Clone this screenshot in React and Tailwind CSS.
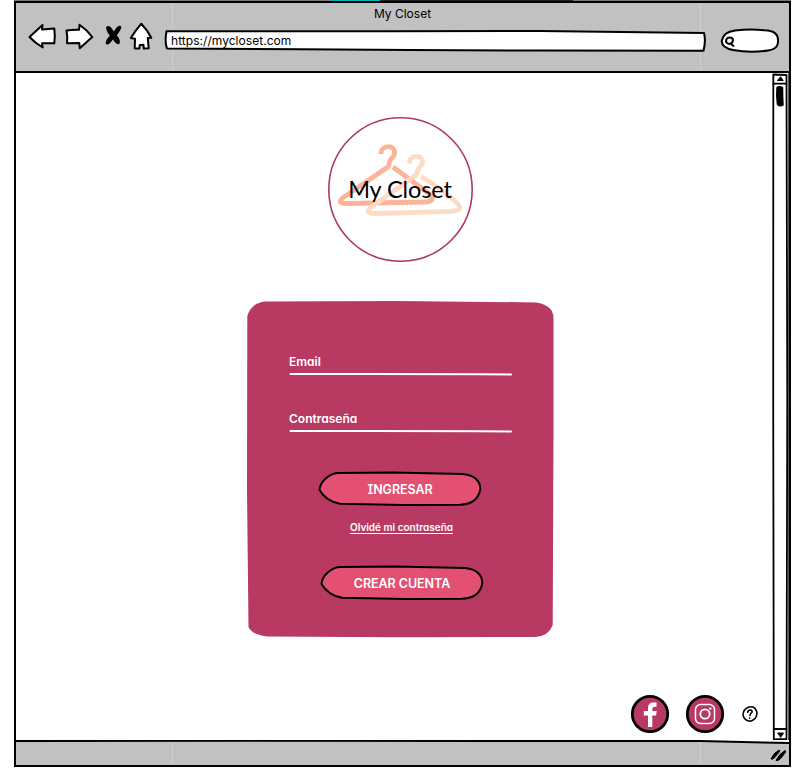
import React from 'react';

const ink = { fill: 'none', stroke: '#000', strokeWidth: 2, strokeLinecap: 'round', strokeLinejoin: 'round' };

function NavIcons() {
  return (
    <div className="flex h-[30px] shrink-0">
      <svg className="h-[30px] w-[30px]" viewBox="28 22 30 30" {...ink} fill="#fff">
        <path d="M29.5 37 L42.5 25 L42 29.5 L54.3 28.5 Q55.3 36 54.3 43.3 L42 43.3 L42.7 47.5 Q35 43 29.5 37Z" />
      </svg>
      <svg className="ml-[7px] h-[30px] w-[30px]" viewBox="65 22 30 30" {...ink} fill="#fff">
        <path d="M66.5 30.5 Q73 29.5 79 29.8 L79.5 24.8 Q87 30 92.3 37 L79.8 48.3 L79.3 43 L67 43.3 Q67.8 37 66.5 30.5Z" />
      </svg>
      <svg className="ml-[9px] h-[30px] w-[20px]" viewBox="104 22 20 30">
        <path d="M106.5 26.5 Q109 25 111.5 28 L113.8 31.5 L116.5 27.5 Q119.5 24.5 121.3 26.5 Q121.5 29.5 116.8 35.2 Q121 40 119.5 43.8 Q117 45.5 112.8 39.5 Q108.5 46 105.8 44 Q105 40.5 109.8 35.7 Q105 29.5 106.5 26.5Z" />
      </svg>
      <svg className="ml-[5px] h-[30px] w-[26px]" viewBox="129 22 26 30" {...ink} fill="#fff">
        <path d="M141.3 23.7 Q147 29.5 151.3 37.8 L147.8 38 L148.7 48.3 L143.8 48.6 L143.5 44.8 L139.8 45 L139.3 48.6 L134.7 48.4 L135 38.8 L130.8 38 Q135.5 30.5 141.3 23.7Z" />
      </svg>
    </div>
  );
}

function Toolbar() {
  return (
    <header className="relative h-[68px] shrink-0 bg-[#c1c1c1]">
      <svg className="absolute inset-0 h-[68px] w-[773px]" viewBox="16 3 773 68" stroke="#cdcdcd">
        <path d="M172.5 3 V71 M700.5 3 V71" />
      </svg>
      <h1 className="relative h-[19px] pt-[1px] text-center text-[12px] leading-[19px]">My Closet</h1>
      <div className="relative flex pl-[12px]">
        <NavIcons />
        <div className="relative ml-[9px] mt-[7px] h-[24px] w-[542px]">
          <svg className="absolute inset-0 h-[24px] w-[542px]" viewBox="164 29 542 24" {...ink} fill="#fff">
            <path d="M166.5 31.2 L390 31.3 L540 31 L704 33 Q706 41 703.5 50.8 L540 50.6 L410 50 L300 49.2 L167 48.5 Q164.5 42 166.5 31.2Z" />
          </svg>
          <span className="relative block pl-[7px] text-[12px] leading-[23px] tracking-[0.04px]">https://mycloset.com</span>
        </div>
        <svg className="ml-[14px] mt-[4px] h-[28px] w-[60px]" viewBox="720 26 60 28" {...ink} fill="#fff">
          <path d="M735 30.5 Q750 28.5 765 30.3 Q778 31 778 40 Q779 49 768 50.5 Q750 53 733 50 Q722 48 721.7 41 Q723 32 735 30.5Z" />
          <path d="M732 42.8 Q734 39.8 732 38 Q729 36.6 727 38.5 Q725 41 727 43 Q729.5 44.8 732 42.8 L731 44 L733.5 46" />
        </svg>
      </div>
    </header>
  );
}

function Logo() {
  return (
    <div className="relative flex h-[146px] w-[146px] items-center justify-center">
      <svg className="absolute inset-0 h-[146px] w-[146px]" viewBox="-0.5 0.5 146 146" fill="none" strokeWidth="4.8" strokeLinejoin="round">
        <circle cx="73" cy="73" r="71.7" stroke="#ad3860" strokeWidth="1.6" />
        <path stroke="#fcb397" d="M53.5 37.5 C53.5 28 68 27.5 67 37 C66 42 61.5 42 61.5 48 L61 50 L14.5 82 C11 86 13 87 20 87 L97 85.5 C107 85 107 81 100 76 L65.5 50.5" />
        <path stroke="#fddbc7" d="M81.5 47 C82 37.5 96 37.5 95 46 C94 51 90 50 89.5 57 L88 59 L43 91 C39 95 40 97 48 97 L123 94.8 C135 94 134 91 127 84 Q112 71 93.5 60" />
      </svg>
      <span className="relative mb-[2px] whitespace-nowrap font-[Lato,sans-serif] text-[23.5px] leading-[30px] tracking-[-0.1px]">My Closet</span>
    </div>
  );
}

function Field({ label }) {
  return (
    <label className="block h-[57px] w-[223px]">
      <span className="block h-[20px] text-[12px] font-semibold leading-[19px]">{label}</span>
      <svg className="h-[4px] w-[223px]" viewBox="0 0 223 4" fill="none">
        <path d="M1.5 2 L80 2.1 L190 2.2 L222 2.6" stroke="#fff" strokeWidth="2" strokeLinecap="round" />
      </svg>
    </label>
  );
}

function SketchButton({ children, className }) {
  return (
    <button className={'relative block h-[36px] w-[164px] ' + className}>
      <svg className="absolute inset-0 h-[36px] w-[164px]" viewBox="0 0 164 36" {...ink} strokeWidth="1.9" fill="#e35072">
        <path d="M21 2 L75 1.5 L145 3 Q162 5 162.3 18 Q160 33 142 33.8 L85 34 L22 32.8 C12 31 5 25 1.5 19 C2 11 11 2 21 2Z" />
      </svg>
      <span className="relative block text-[12.5px] font-semibold leading-[31px] tracking-[-0.05px] [font-feature-settings:'cv08']">{children}</span>
    </button>
  );
}

function LoginCard() {
  return (
    <form className="relative mt-[37px] h-[338px] w-[308px] text-white">
      <svg className="absolute inset-0 h-[338px] w-[308px]" viewBox="0 0 308 338" fill="#b83962">
        <path d="M19 1.4 L150 1 L290 2.4 Q307.5 5 307.5 18 L307.5 130 L306.7 325 Q303 336 289 337 L150 337.3 L22 336.5 Q6 335 2.5 327 L1 190 L1.3 16 Q5 3 19 1.4Z" />
      </svg>
      <div className="relative pl-[43px] pt-[52px]">
        <Field label="Email" />
        <Field label="Contraseña" />
        <SketchButton className="ml-[29px] mt-[5px]">INGRESAR</SketchButton>
        <a className="ml-[61px] mt-[10px] block h-[20px] text-[10px] font-semibold leading-[20px] underline underline-offset-2" href="#">Olvidé mi contraseña</a>
        <SketchButton className="ml-[31px] mt-[28px]">CREAR CUENTA</SketchButton>
      </div>
    </form>
  );
}

function SocialLinks() {
  return (
    <div className="mr-[13px] mt-auto flex items-center self-end pb-[6px]">
      <svg className="h-[40px] w-[40px]" viewBox="0 0 40 40">
        <circle cx="20" cy="20" r="17.7" fill="#b83962" stroke="#000" strokeWidth="2.8" />
        <path fill="#fff" d="M18 33 V21.5 H13.8 V17 H18 V14 Q18 8.5 23.5 8.5 H26.5 V12.8 H24.5 Q22.3 12.8 22.3 15 V17 H26.8 L26 21.5 H22.3 V33Z" />
      </svg>
      <svg className="ml-[15px] h-[40px] w-[40px]" viewBox="0 0 40 40" fill="none" stroke="#fff" strokeWidth="1.5">
        <circle cx="20" cy="20" r="17.7" fill="#b83962" stroke="#000" strokeWidth="2.8" />
        <rect x="10.5" y="10.5" width="19" height="19" rx="5" />
        <circle cx="20" cy="20" r="4.7" strokeWidth="1.8" />
        <circle cx="25.4" cy="14.6" r="1.2" fill="#fff" stroke="none" />
      </svg>
      <svg className="ml-[16px] h-[18px] w-[18px]" viewBox="0 0 18 18" {...ink} strokeWidth="1.6">
        <path d="M8 2 Q14 .5 15.8 7 Q16.5 14 9.5 16.2 Q3.5 16 2 10.5 Q2 4 8 2Z" />
        <path d="M6.7 7.4 Q7 5 9.3 5 Q11.5 5.3 11 7.4 Q9 8.5 9 10.5 M8.7 13 L8.7 13.2" />
      </svg>
    </div>
  );
}

function Scrollbar() {
  return (
    <svg className="h-full w-[17px] shrink-0" viewBox="772 73 17 668" {...ink} strokeWidth="1.8">
      <path fill="#fff" d="M773.3 74.5 L786.5 75 L787.3 400 L786.5 740 L773.8 740.3 L773.2 400Z" />
      <path d="M773.3 83.7 H786.5 M773.7 730 H786.5" />
      <path fill="#000" strokeWidth="1" d="M780.7 77 L783.2 80.5 H777.8Z M778 734 H783.5 L780.8 738Z" />
      <path fill="#000" strokeWidth="1.5" d="M777 87.5 Q780 86 782.5 87.7 Q782.5 98 783 105 Q780 106.8 777.5 104.5 Q776.3 95 777 87.5Z" />
      <path stroke="#555" strokeWidth="1" strokeLinecap="butt" d="M788.5 73 V741" />
    </svg>
  );
}

function StatusBar() {
  return (
    <footer className="h-[25px] shrink-0">
      <svg className="h-[25px] w-[773px]" viewBox="16 740 773 25">
        <path fill="#c1c1c1" d="M16 741 L500 740.8 L700 741 L789 743 V765 H16Z" />
        <path stroke="#cdcdcd" d="M172.5 741 V765 M700.5 741 V765" />
        <path {...ink} d="M16 741 L250 740.7 L500 741 L700 741 L789 743" />
        <path fill="#000" stroke="#000" strokeWidth="1" d="M771 759 Q773 753.5 779 750 Q781 750.5 777 754.5 Q773.5 760 771 759Z M776 760.5 Q779 754 785 750.5 Q787 751 783 755.5 Q779 761.5 776 760.5Z" />
      </svg>
    </footer>
  );
}

export default function App() {
  return (
    <div className="h-[768px] w-[806px] overflow-hidden bg-white pl-[14px] font-[Inter,'Liberation_Sans',sans-serif] text-black [font-feature-settings:'cv11']">
      <div className="flex h-px w-[777px] bg-[#777a76]">
        <div className="ml-[318px] w-[48px] bg-[#00b8c4]" />
        <div className="w-[193px] bg-[#222]" />
      </div>
      <div className="flex h-[766px] w-[777px] flex-col border-2 border-black">
        <Toolbar />
        <div className="h-[2px] shrink-0 bg-black" />
        <div className="flex h-[667px] shrink-0">
          <main className="flex flex-1 flex-col items-center pt-[44px]">
            <div className="ml-[12px]">
              <Logo />
            </div>
            <div className="ml-[12px]">
              <LoginCard />
            </div>
            <SocialLinks />
          </main>
          <Scrollbar />
        </div>
        <StatusBar />
      </div>
    </div>
  );
}
